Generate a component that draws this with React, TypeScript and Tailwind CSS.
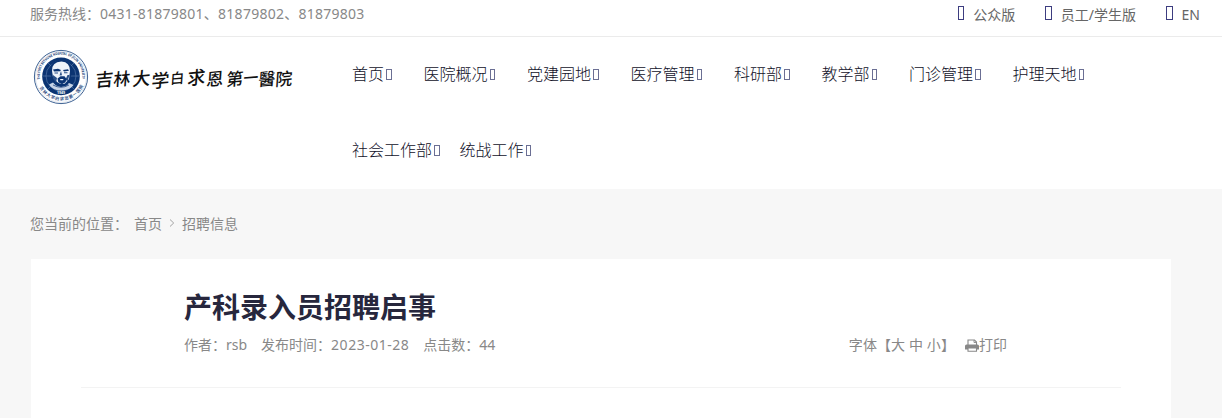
const primaryNav = ["首页", "医院概况", "党建园地", "医疗管理", "科研部", "教学部", "门诊管理", "护理天地"];
const secondaryNav = ["社会工作部", "统战工作"];
const versions = ["公众版", "员工/学生版", "EN"];

function NavItem({ label }: { label: string }) {
  return (
    <a className="flex items-center whitespace-nowrap text-[16px] font-light text-[#101028]">
      {label}
      <span className="ml-[2px] h-[11px] w-[5.5px] border border-[#6b6f94]" />
    </a>
  );
}

function PrintIcon() {
  return (
    <svg viewBox="0 0 14 13" className="ml-[10px] h-[13px] w-[14px] text-[#888]">
      <path d="M3 6V1h6.500L11.500 3v3" fill="none" stroke="currentColor" strokeWidth="1.100" />
      <path d="M9 1v2.500h2.500" fill="none" stroke="currentColor" strokeWidth="0.900" />
      <path d="M1.500 5.500h11q1.500 0 1.500 1.500v3.500H0V7q0-1.500 1.500-1.500z" fill="currentColor" />
      <path d="M3 9h8.500v3.300H3z" fill="#fff" stroke="currentColor" strokeWidth="1.100" />
    </svg>
  );
}

function Emblem() {
  return (
    <svg viewBox="0 0 56 56" className="h-14 w-14 shrink-0">
      <defs>
        <path id="ring-top" d="M7.2 31 A21.2 21.2 0 1 1 48.8 31" />
        <path id="ring-bottom" d="M4.2 32 A24.3 24.3 0 0 0 51.8 32" />
      </defs>
      <circle cx="28" cy="28" r="26.6" fill="#fff" stroke="#285087" strokeWidth="0.9" />
      <circle cx="28" cy="28" r="25.4" fill="none" stroke="#b5c4d9" strokeWidth="0.4" />
      <circle cx="28" cy="27.4" r="18.8" fill="#0b3472" />
      <g fill="none" stroke="#6f8db8" strokeWidth="0.5">
        <circle cx="28" cy="27" r="15" />
        <path d="M9.6 27h36.8M15 14l26 26M41 14L15 40" />
      </g>
      {/* portrait */}
      <path d="M16.500 23q0-11.500 12-12q10.500 0.500 10.500 12l-2 8q-2 6-8 6q-8 0-10-7z" fill="#0b3472" />
      <path d="M19 22q-0.500-9 9.500-9.500q8.500 0.500 8.500 9.500l-1 8-4 4.500q-4 1.500-8-1.500l-4-5z" fill="#eef3f9" />
      <path d="M20 20.500l5-0.800 3 1.300-1 1.200-6 0.400zM30 21l5-0.800 1 1.600-5 0.600z" fill="#0b3472" />
      <path d="M21.500 23.500h3.500v1h-3.500zM31 23.300h3.500v1H31z" fill="#294f87" />
      <path d="M28 22l1 4.200-2.500 0.400M20 26l4 3-1 4.500-3-4zM34.500 26l2 0-2 6.500-2-2z" fill="#294f87" />
      <path d="M24.500 29.500l3-2.200 4 0 2 2.600-1 3.300-3.500 2-3.700-2z" fill="#0b3472" />
      <path d="M27 30h3.500l-0.500 1.300h-2.500z" fill="#eef3f9" />
      <path d="M16 35.500l4-2 3 3 5 1.500 6-1.500 2-2.500 4.500 2q-3 5-12 5.500q-9 0-12.500-6" fill="#c7d4e6" />
      <path d="M20 36q8 4.500 16 0" stroke="#0b3472" strokeWidth="0.7" fill="none" />
      <text x="28" y="44.6" textAnchor="middle" fill="#fff" className="text-[3.6px] font-bold">1949</text>
      <text fill="#0b3472" className="text-[3.6px] font-bold">
        <textPath href="#ring-top" startOffset="1" textLength="72" lengthAdjust="spacingAndGlyphs">
          THE FIRST BETHUNE HOSPITAL OF JILIN UNIVERSITY
        </textPath>
      </text>
      <text fill="#0b3472" className="text-[4.4px] font-medium">
        <textPath href="#ring-bottom" startOffset="7" textLength="54">吉林大学白求恩第一医院</textPath>
      </text>
    </svg>
  );
}

// each character is set on its own to get the uneven brush-written rhythm
const wordmark = [
  { c: "吉", x: 4, y: 29, s: 18 },
  { c: "林", x: 22, y: 28, s: 17 },
  { c: "大", x: 41, y: 28, s: 18 },
  { c: "学", x: 60, y: 30, s: 18 },
  { c: "白", x: 79, y: 26, s: 14 },
  { c: "求", x: 96, y: 27, s: 18 },
  { c: "恩", x: 115, y: 28, s: 17 },
  { c: "第", x: 135, y: 28, s: 17 },
  { c: "一", x: 152, y: 26, s: 15 },
  { c: "醫", x: 167, y: 28, s: 17 },
  { c: "院", x: 184, y: 28, s: 17 },
];

function Wordmark() {
  return (
    <svg viewBox="0 0 204 42" className="h-[42px] w-[204px]">
      {wordmark.map(({ c, x, y, s }) => (
        <text
          key={c}
          fontSize={s}
          transform={`translate(${x} ${y}) rotate(-5) skewX(-9)`}
          fill="#111"
          className="font-medium"
        >
          {c}
        </text>
      ))}
    </svg>
  );
}

export default function App() {
  return (
    <div className="h-[418px] w-[1222px] overflow-hidden bg-white font-['Noto_Sans','Noto_Sans_CJK_SC',sans-serif] text-[14px] text-[#888]">
      {/* Top bar */}
      <div className="flex h-[37px] items-start justify-between border-b border-[#ebebeb] pl-[30px] pr-[22px] leading-[28px]">
        <span>
          服务热线：<span className="tracking-[0.25px]">0431-81879801、81879802、81879803</span>
        </span>
        <div className="flex gap-[30px] text-[#666]">
          {versions.map((v) => (
            <span key={v} className="flex pt-px">
              <i className="mr-[9px] mt-[5px] h-[14px] w-[6.5px] border border-[#3d3d80]" />
              {v}
            </span>
          ))}
        </div>
      </div>

      {/* Header */}
      <header className="flex h-[152px] pl-[33px]">
        <div className="flex w-[319px] items-start pt-3">
          <Emblem />
          <div className="pl-[2px] pt-[9px]">
            <Wordmark />
          </div>
        </div>
        <nav>
          <div className="flex h-[76px] items-center gap-8 pb-0.5">
            {primaryNav.map((n) => (
              <NavItem key={n} label={n} />
            ))}
          </div>
          <div className="flex h-[76px] items-center gap-5 pb-0.5">
            {secondaryNav.map((n) => (
              <NavItem key={n} label={n} />
            ))}
          </div>
        </nav>
      </header>

      <main className="h-[229px] bg-[#f7f7f7] px-[30px]">
        {/* Breadcrumb */}
        <div className="flex h-[70px] items-center pb-0.5">
          <span>您当前的位置：</span>
          <span className="ml-[6px]">首页</span>
          <svg viewBox="0 0 6 8" className="mx-[7px] h-2 w-[6px]" fill="none" stroke="#999" strokeWidth="0.9">
            <path d="M1 0.5L4.7 4L1 7.5" />
          </svg>
          <span>招聘信息</span>
        </div>

        {/* Article */}
        <article className="ml-px h-[159px] w-[1140px] bg-white px-[50px] pt-[28px]">
          <div className="h-[101px] border-b border-[#f3f3f3] pl-[103px] pr-[114px]">
            <h1 className="text-[28px] font-bold leading-10 text-[#27273d]">产科录入员招聘启事</h1>
            <div className="flex items-center justify-between leading-9">
              <div className="flex gap-[14px]">
                <span>作者：rsb</span>
                <span>
                  发布时间：<span className="tracking-[0.5px]">2023-01-28</span>
                </span>
                <span>点击数：44</span>
              </div>
              <div className="flex items-center">
                <span className="tracking-[0.1px]">字体【大 中 小】</span>
                <PrintIcon />
                <span>打印</span>
              </div>
            </div>
          </div>
        </article>
      </main>
    </div>
  );
}
